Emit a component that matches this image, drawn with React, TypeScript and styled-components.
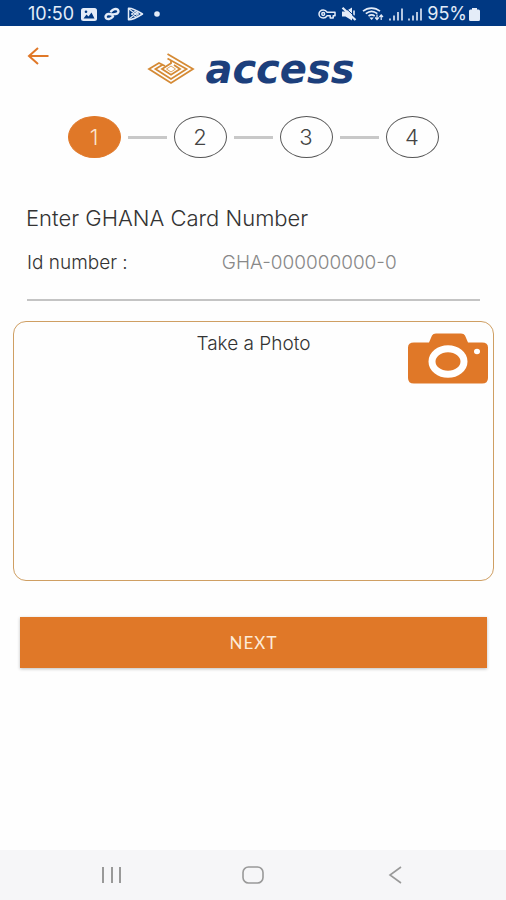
import React from "react";
import styled, { createGlobalStyle } from "styled-components";

const orange = "#e07828";
const navy = "#003882";
const sans = `Inter, Roboto, "Liberation Sans", sans-serif`;

const GlobalStyle = createGlobalStyle`
  * { box-sizing: border-box; }
  body { margin: 0; background: #fefefe; }
  button, input { font: inherit; }
`;

const Screen = styled.div`
  display: flex;
  flex-direction: column;
  min-height: 100vh;
  font-family: ${sans};
  font-weight: 300;
  color: #333;
`;

const StatusBar = styled.header`
  display: flex;
  align-items: center;
  justify-content: space-between;
  height: 26px;
  padding: 2px 26px 0 28px;
  background: ${navy};
  color: #e4ecf8;
  font-size: 18px;
  font-weight: 400;
  line-height: 20px;
`;

const StatusGroup = styled.div<{ $gap: number }>`
  display: flex;
  align-items: center;
  gap: ${(p) => p.$gap}px;
`;

const Battery = styled.span`
  display: flex;
  align-items: center;
  gap: 2px;
`;

const TopBar = styled.div`
  display: grid;
  grid-template-columns: 1fr auto 1fr;
  align-items: start;
  height: 84px;
  padding: 20px 27px 0;
`;

const BackButton = styled.button`
  display: flex;
  width: 22px;
  padding: 0;
  border: 0;
  background: none;
  color: ${orange};
  cursor: pointer;
`;

const Brand = styled.div`
  display: flex;
  align-items: flex-start;
  gap: 10px;
  padding: 6px 4px 0 0;
`;

const BrandName = styled.span`
  font: italic bold 40px/34px "DejaVu Sans", sans-serif;
  color: #1c3f7c;
`;

const Steps = styled.ol`
  display: flex;
  align-items: center;
  justify-content: center;
  gap: 7px;
  margin: 0;
  padding: 6px 0 0;
  list-style: none;
`;

const Step = styled.li<{ $active?: boolean }>`
  display: flex;
  align-items: center;
  justify-content: center;
  width: 53px;
  height: 42px;
  border: 1px solid ${(p) => (p.$active ? orange : "#555")};
  border-radius: 50%;
  background: ${(p) => (p.$active ? orange : "transparent")};
  color: ${(p) => (p.$active ? "#fbe3cc" : "#444")};
  font-size: 22px;
`;

const Connector = styled.li`
  width: 39px;
  height: 3px;
  background: #c8c8c8;
`;

const Form = styled.form`
  display: flex;
  flex-direction: column;
  flex: 1;
  padding-top: 45px;
`;

const Title = styled.h1`
  margin: 0 26px;
  font-size: 22px;
  font-weight: 300;
  line-height: 30px;
`;

const Field = styled.div`
  display: grid;
  grid-template-columns: 43fr 57fr;
  align-items: center;
  margin: 15px 26px 0 27px;
  padding-bottom: 21px;
  border-bottom: 2px solid #c4c4c4;
  font-size: 19px;
  line-height: 30px;
`;

const FieldInput = styled.input`
  width: 100%;
  height: 30px;
  padding: 0;
  border: 0;
  outline: 0;
  background: none;
  color: #333;
  &::placeholder {
    color: #888;
    opacity: 1;
  }
`;

const PhotoBox = styled.section`
  position: relative;
  height: 260px;
  margin: 20px 12px 0 13px;
  padding-top: 10px;
  border: 1px solid #cf9f63;
  border-radius: 13px;
  text-align: center;
  font-size: 19px;
  line-height: 24px;
`;

const CameraButton = styled.button`
  position: absolute;
  top: 11px;
  right: 5px;
  display: flex;
  padding: 0;
  border: 0;
  background: none;
  cursor: pointer;
`;

const NextButton = styled.button`
  height: 51px;
  margin: 36px 19px 20px 20px;
  border: 0;
  background: ${orange};
  box-shadow: 0 1px 3px rgba(0, 0, 0, 0.25);
  color: #fdebd8;
  font-family: Lato, ${sans};
  font-size: 17px;
  font-weight: 400;
  letter-spacing: 1px;
  cursor: pointer;
`;

const NavBar = styled.nav`
  display: flex;
  align-items: center;
  justify-content: space-between;
  height: 50px;
  padding: 0 100px;
  background: #f6f6f8;
`;

const NavButton = styled.button`
  display: flex;
  padding: 0;
  border: 0;
  background: none;
  cursor: pointer;
`;

const Signal = () => (
  <svg width="14" height="13" viewBox="0 0 14 13" fill="none" stroke="currentColor" strokeWidth="1.6">
    <path d="M1 10.5v2M5 7.5v5M9 4v8.5M13 .5v12" />
  </svg>
);

const LeftIcons = () => (
  <>
    <svg width="16" height="13" viewBox="0 0 16 13">
      <rect width="16" height="13" rx="2.5" fill="currentColor" />
      <path d="M2.5 10.5 5.5 6.5l2 2 3-4 3 6z" fill={navy} />
      <circle cx="5" cy="3.8" r="1.3" fill={navy} />
    </svg>
    <svg width="16" height="14" viewBox="0 0 16 14" fill="none" stroke="currentColor" strokeWidth="2.4" strokeLinecap="round">
      <path d="M9 9.6C7 12 4 12.8 2.3 11.3.8 9.8 1.8 7.4 4.2 7c1.6-.3 2.6.6 4.2.6" />
      <path d="M7 4.4C9 2 12 1.2 13.7 2.7c1.5 1.5.5 3.900-1.900 4.300-1.200.2-2.200-.1-3.400.6" />
    </svg>
    <svg width="17" height="14" viewBox="0 0 17 14" fill="none" stroke="currentColor" strokeWidth="1.5" strokeLinejoin="round">
      <path d="M1.500 1.200C4 1 11 4.200 15.500 7 11 9.800 4 13 1.500 12.800z" />
      <path d="M1.500 1.500 11.500 9.500M1.500 12.500l10-8M4.500 7 8 4.500 11.500 7 8 9.500z" strokeWidth="1.100" />
    </svg>
    <svg width="12" height="6" viewBox="0 0 12 6">
      <circle cx="6" cy="3" r="2.800" fill="currentColor" />
    </svg>
  </>
);

const RightIcons = () => (
  <>
    <svg width="18" height="10" viewBox="0 0 18 10" fill="none" stroke="currentColor" strokeWidth="1.5">
      <path d="M9 3.200C8.200 1.700 6.800 1 5.200 1 2.700 1 1 2.800 1 5s1.700 4 4.200 4C6.800 9 8.200 8.300 9 6.800h3.200V9h3V6.800H17V3.200z" strokeLinejoin="round" />
      <circle cx="5.200" cy="5" r="1.400" />
    </svg>
    <svg width="16" height="14" viewBox="0 0 16 14">
      <path d="M1 4.500h3.500L11 .5v13L4.500 9.500H1z" fill="currentColor" />
      <path d="M13 3.500v5" stroke="currentColor" strokeWidth="1.600" />
      <path d="M3.500 0 16 11.500" stroke={navy} strokeWidth="1" />
      <path d="M1.500 .8 14.500 13" stroke="currentColor" strokeWidth="2.200" />
    </svg>
    <svg width="22" height="14" viewBox="0 0 22 14" fill="none" stroke="currentColor" strokeWidth="1.700">
      <path d="M1 4.200c5-4.200 12-4.200 17 0M3.800 6.700c3.500-2.800 8-2.800 11.500 0M6.500 9c2-1.400 4.200-1.400 6.200 0" />
      <path d="m9.600 13-2.200-2.500h4.400z" fill="currentColor" stroke="none" />
      <path d="M15 7.500v5m-1.800-2 1.800 2 1.800-2M19.200 13V8m-1.800 2 1.800-2L21 10" strokeWidth="1.200" />
    </svg>
    <Signal />
    <Signal />
  </>
);

const Diamond = () => (
  <svg width="48" height="34" viewBox="0 0 48 34" fill="none" stroke="#d58a35" strokeWidth="1.800">
    <path d="M20.500 2 46 17 24 31 2 17 12 11l6 3" />
    <path d="M20.500 6.500 39.500 17 24 27 8.500 17 16 12.500" />
    <path d="M27 13 33 17 24 22.800 15 17 24 11.200V8" />
    <path d="m24 14 4.500 3-4.500 3-4.500-3z" strokeWidth="0.800" />
  </svg>
);

const CameraIcon = () => (
  <svg width="80" height="51" viewBox="0 0 80 51">
    <path
      d="M6 9.500h15L24 2.500Q25 .5 28 .5h25q3 0 4 2l3 7h14q6 0 6 5V45q0 5.500-6 5.500H6Q0 50.500 0 45V14.500q0-5 6-5z"
      fill={orange}
    />
    <ellipse cx="40" cy="28.500" rx="16" ry="12.800" fill="none" stroke="#fff" strokeWidth="7" />
    <ellipse cx="69" cy="18.500" rx="3" ry="2.700" fill="#fff" />
  </svg>
);

const steps = [1, 2, 3, 4];

export default function App() {
  return (
    <Screen>
      <GlobalStyle />
      <StatusBar>
        <StatusGroup $gap={7}>
          <span>10:50</span>
          <LeftIcons />
        </StatusGroup>
        <StatusGroup $gap={5}>
          <RightIcons />
          <Battery>
            95%
            <svg width="11" height="13" viewBox="0 0 11 13" fill="currentColor">
              <path d="M3 0h5v1.500h1.500Q11 1.500 11 3v8.500Q11 13 9.500 13h-8Q0 13 0 11.500V3q0-1.500 1.500-1.500H3z" />
            </svg>
          </Battery>
        </StatusGroup>
      </StatusBar>

      <TopBar>
        <BackButton aria-label="Back">
          <svg width="22" height="20" viewBox="0 0 22 20" fill="none" stroke="currentColor" strokeWidth="2">
            <path d="M21.500 10H2M11 2 2 10l9 8" />
          </svg>
        </BackButton>
        <Brand>
          <Diamond />
          <BrandName>access</BrandName>
        </Brand>
      </TopBar>

      <Steps>
        {steps.map((n) => (
          <React.Fragment key={n}>
            {n > 1 && <Connector aria-hidden="true" />}
            <Step $active={n === 1} aria-current={n === 1 ? "step" : undefined}>
              {n}
            </Step>
          </React.Fragment>
        ))}
      </Steps>

      <Form onSubmit={(e) => e.preventDefault()}>
        <Title>Enter GHANA Card Number</Title>
        <Field>
          <label htmlFor="card-id">Id number :</label>
          <FieldInput id="card-id" type="text" placeholder="GHA-000000000-0" />
        </Field>
        <PhotoBox>
          Take a Photo
          <CameraButton type="button" aria-label="Open camera">
            <CameraIcon />
          </CameraButton>
        </PhotoBox>
        <NextButton type="submit">NEXT</NextButton>
      </Form>

      <NavBar aria-label="System">
        <NavButton aria-label="Recent apps">
          <svg width="22" height="18" viewBox="0 0 22 18" stroke="#999" strokeWidth="2">
            <path d="M3 1v16M12 1v16M20 1v16" />
          </svg>
        </NavButton>
        <NavButton aria-label="Home">
          <svg width="22" height="18" viewBox="0 0 22 18" fill="none" stroke="#999" strokeWidth="1.600">
            <rect x="1" y="1" width="20" height="16" rx="5.500" />
          </svg>
        </NavButton>
        <NavButton aria-label="Go back">
          <svg width="22" height="18" viewBox="0 0 22 18" fill="none" stroke="#999" strokeWidth="1.600">
            <path d="M17 1 6 9l11 8" />
          </svg>
        </NavButton>
      </NavBar>
    </Screen>
  );
}
